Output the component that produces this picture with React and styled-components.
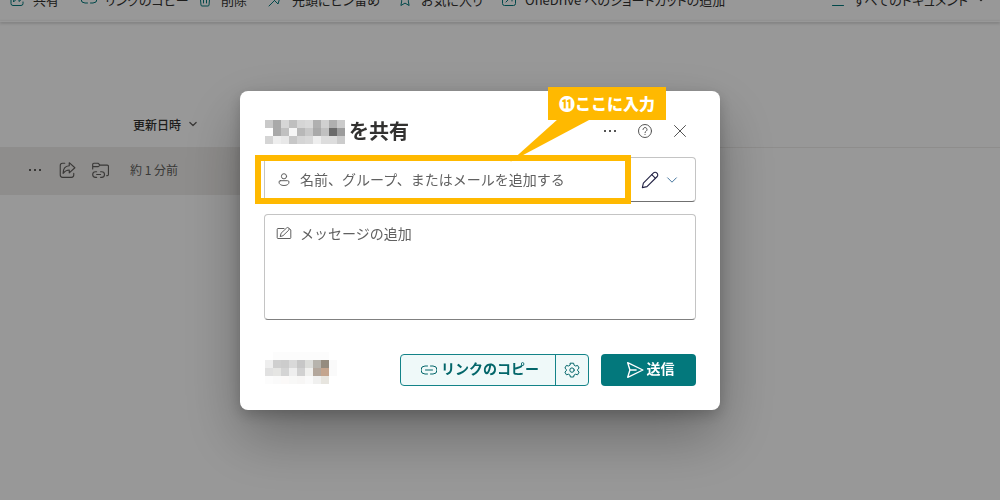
import React from "react";
import styled, { createGlobalStyle } from "styled-components";

const GlobalStyle = createGlobalStyle`
  * {
    box-sizing: border-box;
  }

  html,
  body,
  #root {
    height: 100%;
  }

  body {
    margin: 0;
    overflow: hidden;
    background-color: #fdfdfd;
    color: #323130;
    font-family: "Noto Sans CJK JP", "Noto Sans", sans-serif;
  }

  button,
  input,
  textarea {
    margin: 0;
    padding: 0;
    border: 0;
    background: none;
    color: inherit;
    font: inherit;
  }
`;

const Page = styled.main`
  min-height: 100%;
`;

const Toolbar = styled.nav`
  display: flex;
  align-items: flex-end;
  justify-content: space-between;
  height: 21px;
  padding: 0 14px 6px 9px;
  overflow: hidden;
  background-color: #fdfdfd;
`;

const ToolbarEdge = styled.div`
  height: 1px;
  box-shadow: 0 1px 3px rgba(0, 0, 0, 0.4);
`;

const ToolbarGroup = styled.div`
  display: flex;
  flex: none;
`;

const ToolbarButton = styled.button`
  display: flex;
  align-items: center;
  gap: 8px;
  width: ${(props) => (props.$width ? `${props.$width}px` : "auto")};
  height: 32px;
  font-size: 13px;
  font-feature-settings: "palt";
  white-space: nowrap;
`;

const Icon = styled.svg`
  flex: none;
  width: ${(props) => props.$size || 16}px;
  height: ${(props) => props.$size || 16}px;
  fill: none;
  stroke: ${(props) => props.$color || "currentColor"};
  stroke-width: ${(props) => props.$stroke || 1};
  stroke-linecap: round;
  stroke-linejoin: round;
`;

const FileTable = styled.table`
  width: 100%;
  margin-top: 80px;
  border-collapse: collapse;
  font-size: 12px;
  text-align: left;
`;

const HeadCell = styled.th`
  height: 45px;
  padding: 0;
  border-bottom: 1px solid #edebe9;
  font-weight: 500;
`;

const Cell = styled.td`
  height: 48px;
  padding: 0 0 3px;
  background-color: ${(props) => (props.$selected ? "#edebe9" : "transparent")};
  color: #605e5c;
`;

const SortButton = styled.button`
  display: flex;
  align-items: center;
  gap: 7px;
  padding-left: 3px;
`;

const RowActions = styled.div`
  display: flex;
  align-items: center;
  gap: 15px;
  padding-left: 27px;
`;

const IconButton = styled.button`
  display: flex;
  align-items: center;
  justify-content: center;
`;

const Overlay = styled.div`
  position: fixed;
  inset: 0;
  display: flex;
  align-items: center;
  justify-content: center;
  padding: 1px 40px 0 0;
  background-color: rgba(0, 0, 0, 0.4);
`;

const Dialog = styled.form`
  width: 100%;
  max-width: 480px;
  padding: 24px;
  border-radius: 8px;
  background-color: #fff;
  box-shadow: 0 26px 58px rgba(0, 0, 0, 0.3), 0 5px 15px rgba(0, 0, 0, 0.2);
`;

const DialogHeader = styled.header`
  display: flex;
  align-items: center;
  justify-content: space-between;
  height: 32px;
`;

const DialogTitle = styled.h1`
  display: flex;
  align-items: center;
  gap: 4px;
  margin: 0;
  padding-left: 1px;
  font-size: 20px;
  line-height: 32px;
  font-weight: 700;
`;

const HeaderActions = styled.div`
  display: flex;
  gap: 19px;
  padding-right: 8px;
  color: #555;
`;

const Mosaic = styled.span`
  display: grid;
  grid-template-columns: repeat(${(props) => props.$columns}, 8px);
  grid-auto-rows: 8px;

  ${DialogTitle} & {
    margin-top: 2px;
  }
`;

const MosaicCell = styled.span`
  background-color: ${(props) => props.$color};
`;

const RecipientRow = styled.div`
  display: flex;
  height: 45px;
  margin-top: 10px;
  border: 1px solid #c4c4c4;
  border-bottom-color: #707070;
  border-radius: 4px;
`;

const RecipientField = styled.label`
  position: relative;
  display: flex;
  flex: 1;
  align-items: center;
  gap: 8px;
  padding-left: 11px;
  color: #616161;
`;

const TextInput = styled.input`
  flex: 1;
  min-width: 0;
  height: 100%;
  padding-bottom: 2px;
  outline: none;
  font-size: 14px;

  &::placeholder {
    color: #616161;
  }
`;

const PermissionButton = styled.button`
  display: flex;
  align-items: center;
  justify-content: center;
  gap: 6px;
  width: 64px;
  padding-right: 7px;
`;

const Highlight = styled.span`
  position: absolute;
  inset: -3px 0 -3px -10px;
  border: 6px solid #ffb900;
  pointer-events: none;
`;

const Callout = styled.span`
  position: absolute;
  right: -35px;
  bottom: 81px;
  padding: 0 11px;
  background-color: #ffb900;
  color: #fff;
  font-size: 16px;
  line-height: 33px;
  font-weight: 900;
  white-space: nowrap;
`;

const CalloutTail = styled.svg`
  position: absolute;
  top: 32px;
  right: 76px;
  width: 80px;
  height: 43px;
  fill: #ffb900;
`;

const MessageField = styled.label`
  display: flex;
  gap: 8px;
  height: 106px;
  margin-top: 12px;
  padding: 7px 12px 7px 11px;
  border: 1px solid #c4c4c4;
  border-bottom-color: #808080;
  border-radius: 4px;
  color: #616161;

  ${Icon} {
    margin-top: 3px;
  }
`;

const MessageInput = styled.textarea`
  flex: 1;
  min-width: 0;
  outline: none;
  resize: none;
  font-size: 14px;
  line-height: 22px;

  &::placeholder {
    color: #616161;
  }
`;

const DialogFooter = styled.footer`
  display: flex;
  align-items: center;
  height: 32px;
  margin-top: 34px;
  padding-left: 1px;

  ${Mosaic} {
    margin-bottom: 4px;
  }
`;

const SplitButton = styled.div`
  display: flex;
  height: 32px;
  margin-left: auto;
  border: 1px solid #138388;
  border-radius: 4px;
  background-color: #eff9f9;
  color: #03666a;
`;

const CopyButton = styled.button`
  display: flex;
  align-items: center;
  gap: 4px;
  padding: 0 16px 0 20px;
  font-size: 14px;
  font-weight: 700;
`;

const ButtonLabel = styled.span`
  padding-bottom: 4px;
`;

const LinkSettings = styled(IconButton)`
  width: 33px;
  border-left: 1px solid #138388;
`;

const SendButton = styled.button`
  display: flex;
  align-items: center;
  justify-content: center;
  gap: 3px;
  width: 95px;
  height: 32px;
  margin-left: 12px;
  padding-left: 3px;
  border-radius: 4px;
  background-color: #03787c;
  color: #fff;
  font-size: 14px;
  font-weight: 700;
`;

const TEAL = "#03787c";

const paths = {
  share: (
    <>
      <path d="M6 2H4a2 2 0 0 0-2 2v8.500a2 2 0 0 0 2 2h8a2 2 0 0 0 2-2V11" />
      <path d="M10 1.500 15 6l-5 4.500V8C7.500 8 6 9 4.500 11 4.500 7 6.500 4.500 10 4.200z" />
    </>
  ),
  link: (
    <path d="M6.500 4H4a4 4 0 0 0 0 8h2.500M9.500 4H12a4 4 0 0 1 0 8H9.500M4.500 8h7" />
  ),
  trash: <path d="M1.500 3.500h13M6 3.500a2 2 0 0 1 4 0M3 3.500 4 14a1 1 0 0 0 1 1h6a1 1 0 0 0 1-1l1-10.500M6.500 6.500V12M9.500 6.500V12" />,
  pin: <path d="m10 .500 5.500 5.500-4 2-1.500 5-7-7 5-1.500zM6.500 9.500l-5.500 5.500" />,
  star: <path d="m8 1.500 2 4.300 4.700.6-3.500 3.200.9 4.900L8 12.100l-4.100 2.400.9-4.900L1.300 6.400l4.700-.6z" />,
  shortcut: (
    <>
      <rect x="1.500" y="1.500" width="13" height="13" rx="2" />
      <path d="m5 11 5.500-5.500M6 5h5v5" />
    </>
  ),
  list: <path d="M2.500 3.500h11M2.500 7.500h11M2.500 14.500h11" />,
  folder: (
    <>
      <path d="M1.500 7V3a1 1 0 0 1 1-1h3.700l2 1.700h6.300a1 1 0 0 1 1 1V12a1 1 0 0 1-1 1h-.500M1.500 5h5l1.700-1.300" />
      <path d="M5 9.500H4a2.500 2.500 0 0 0 0 5h1M8.500 9.500h1a2.500 2.500 0 0 1 0 5h-1M5 12h3.500" />
    </>
  ),
  person: (
    <>
      <circle cx="8" cy="4.300" r="2.600" />
      <path d="M4.300 8.700h7.400a1.300 1.300 0 0 1 1.300 1.300c0 2.300-2 3.500-5 3.500s-5-1.200-5-3.500a1.300 1.300 0 0 1 1.300-1.300z" />
    </>
  ),
  compose: (
    <>
      <path d="M8 3.500H2a.8.8 0 0 0-.8.8v8.400a.8.8 0 0 0 .8.800h12a.8.800 0 0 0 .8-.8V5l-1.300-1.300" />
      <path d="m4.300 11.200.8-3 5.500-5.200a1.500 1.500 0 0 1 2.200 2.100L7.300 10.400z" />
    </>
  ),
  pencil: (
    <>
      <path d="m1.200 14.800.9-4.100 8.800-8.900a2 2 0 0 1 3.300 3.300l-8.900 8.800z" />
      <path d="m9.600 3.300 3.100 3.100" />
    </>
  ),
  help: (
    <>
      <circle cx="8" cy="8" r="6.500" />
      <path d="M6 6.500a2 2 0 1 1 3.200 1.600C8.400 8.700 8 9 8 9.700M8 11.500v.1" />
    </>
  ),
  close: <path d="m2.500 2.500 11 11M13.500 2.500l-11 11" />,
  chevron: <path d="m3 5.500 5 5 5-5" />,
  send: <path d="m1.500 1.500 13.500 6.500-13.500 6.500L3.500 8zM3.500 8H9" />,
  more: (
    <>
      <rect x="2" y="7" width="2" height="2" />
      <rect x="7" y="7" width="2" height="2" />
      <rect x="12" y="7" width="2" height="2" />
    </>
  ),
  gear: (
    <>
      <path d="m6.400 1.200h3.200l.5 2 1.500.8 2-.6 1.500 2.700-1.400 1.300v1.400l1.400 1.300-1.500 2.700-2-.6-1.500.8-.5 2H6.400l-.5-2-1.500-.8-2 .6L.9 10.100l1.400-1.300V7.400L.9 6.100l1.500-2.700 2 .6 1.500-.8z" />
      <circle cx="8" cy="8.100" r="2.200" />
    </>
  )
};

const Glyph = ({ name, size, color, stroke }) => (
  <Icon
    viewBox="0 0 16 16"
    $size={size}
    $color={color}
    $stroke={stroke}
    aria-hidden="true"
  >
    {name === "more" ? (
      <g fill={color || "currentColor"} stroke="none">
        {paths.more}
      </g>
    ) : (
      paths[name]
    )}
  </Icon>
);

const commands = [
  { icon: "share", label: "共有", width: 72 },
  { icon: "link", label: "リンクのコピー", width: 116 },
  { icon: "trash", label: "削除", width: 71 },
  { icon: "pin", label: "先頭にピン留め", width: 129 },
  { icon: "star", label: "お気に入り", width: 104 },
  { icon: "shortcut", label: "OneDrive へのショートカットの追加", width: 236 }
];

const nameCells = [
  "#c9c9c9", "#a9a9a9", "#d6d6d6", "#bfbfbf", "#d5d5d5", "#d9d9d9", "#b0b0b0", "#d0d0d0", "#afafaf", "#cacaca",
  "#ffffff", "#a9a9a9", "#c0c0c0", "#f6f6f6", "#b8b8b8", "#c8c8c8", "#a9a9a9", "#c0c0c0", "#6b6b6b", "#9c9c9c",
  "#d5d5d5", "#eeeeee", "#e8e8e8", "#c7c7c7", "#d5d5d5", "#d9d9d9", "#eeeeee", "#dddddd", "#dddddd", "#cccccc"
];

const peopleCells = [
  "#ffffff", "#fcfcfc", "#fcfcfc", "#fcfcfc", "#fcfcfc", "#fcfcfc", "#fcfcfc", "#fcfcfc", "#ffffff",
  "#eeeeee", "#cfcfcf", "#cccccc", "#d9d9d9", "#c7c7c7", "#dcddda", "#b7b4ad", "#958c7f", "#fafafa",
  "#e1e1e1", "#e5e5e3", "#d4d4d4", "#eeeeee", "#d1d1d1", "#f0f0ee", "#b3a79c", "#c4a58e", "#fafafa",
  "#fcfcfc", "#fafafa", "#fbf9f8", "#f8f8f7", "#f7f6f5", "#fafafa", "#f0f0ef", "#e7e5df", "#ffffff"
];

const Pixels = ({ cells, columns }) => (
  <Mosaic $columns={columns}>
    {cells.map((color, index) => (
      <MosaicCell key={index} $color={color} />
    ))}
  </Mosaic>
);

const CommandBar = () => (
  <>
    <Toolbar>
      <ToolbarGroup>
        {commands.map(({ icon, label, width }) => (
          <ToolbarButton key={icon} type="button" $width={width}>
            <Glyph name={icon} color={TEAL} />
            {label}
          </ToolbarButton>
        ))}
        <ToolbarButton type="button" aria-label="その他">
          <Glyph name="more" color={TEAL} />
        </ToolbarButton>
      </ToolbarGroup>
      <ToolbarGroup>
        <ToolbarButton type="button">
          <Glyph name="list" color={TEAL} />
          すべてのドキュメント
          <Glyph name="chevron" size={10} stroke={2} />
        </ToolbarButton>
      </ToolbarGroup>
    </Toolbar>
    <ToolbarEdge />
  </>
);

const FileList = () => (
  <FileTable>
    <colgroup>
      <col width="130" />
      <col width="250" />
      <col />
    </colgroup>
    <thead>
      <tr>
        <HeadCell />
        <HeadCell>
          <SortButton type="button">
            更新日時
            <Glyph name="chevron" size={10} color="#605e5c" stroke={2} />
          </SortButton>
        </HeadCell>
        <HeadCell />
      </tr>
    </thead>
    <tbody>
      <tr>
        <Cell $selected>
          <RowActions>
            <IconButton type="button" aria-label="その他">
              <Glyph name="more" />
            </IconButton>
            <IconButton type="button" aria-label="共有">
              <Glyph name="share" size={18} />
            </IconButton>
            <IconButton type="button" aria-label="リンク">
              <Glyph name="folder" size={18} />
            </IconButton>
          </RowActions>
        </Cell>
        <Cell $selected>約 1 分前</Cell>
        <Cell />
      </tr>
    </tbody>
  </FileTable>
);

const ShareDialog = () => (
  <Dialog
    role="dialog"
    aria-labelledby="share-title"
    onSubmit={(event) => event.preventDefault()}
  >
    <DialogHeader>
      <DialogTitle id="share-title">
        <Pixels cells={nameCells} columns={10} />
        を共有
      </DialogTitle>
      <HeaderActions>
        <IconButton type="button" aria-label="その他のオプション">
          <Glyph name="more" />
        </IconButton>
        <IconButton type="button" aria-label="ヘルプ">
          <Glyph name="help" />
        </IconButton>
        <IconButton type="button" aria-label="閉じる">
          <Glyph name="close" />
        </IconButton>
      </HeaderActions>
    </DialogHeader>
    <RecipientRow>
      <RecipientField>
        <Glyph name="person" />
        <TextInput
          type="text"
          aria-label="宛先"
          placeholder="名前、グループ、またはメールを追加する"
        />
        <Highlight />
        <Callout>
          ⓫ここに入力
          <CalloutTail viewBox="0 0 80 43">
            <path d="M48 0h33L0 43z" />
          </CalloutTail>
        </Callout>
      </RecipientField>
      <PermissionButton type="button" aria-label="編集可能">
        <Glyph name="pencil" size={18} color="#242445" />
        <Glyph name="chevron" size={14} color="#2b6290" />
      </PermissionButton>
    </RecipientRow>
    <MessageField>
      <Glyph name="compose" />
      <MessageInput aria-label="メッセージ" placeholder="メッセージの追加" />
    </MessageField>
    <DialogFooter>
      <Pixels cells={peopleCells} columns={9} />
      <SplitButton>
        <CopyButton type="button">
          <Glyph name="link" />
          <ButtonLabel>リンクのコピー</ButtonLabel>
        </CopyButton>
        <LinkSettings type="button" aria-label="リンクの設定">
          <Glyph name="gear" />
        </LinkSettings>
      </SplitButton>
      <SendButton type="submit">
        <Glyph name="send" size={18} stroke={1.2} />
        <ButtonLabel>送信</ButtonLabel>
      </SendButton>
    </DialogFooter>
  </Dialog>
);

const App = () => (
  <>
    <GlobalStyle />
    <Page>
      <CommandBar />
      <FileList />
    </Page>
    <Overlay>
      <ShareDialog />
    </Overlay>
  </>
);

export default App;
